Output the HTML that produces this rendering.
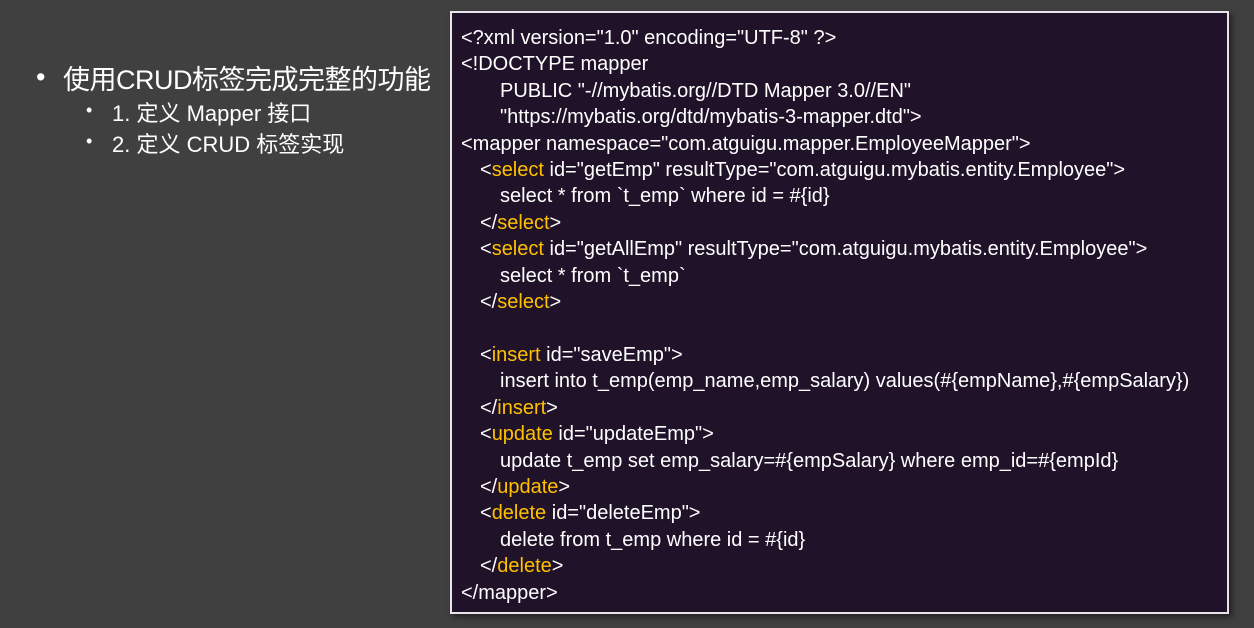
<!DOCTYPE html>
<html><head><meta charset="utf-8"><style>
html,body{margin:0;padding:0}
body{width:1254px;height:628px;background:#404040;position:relative;overflow:hidden;font-family:"Liberation Sans","Noto Sans CJK SC",sans-serif;color:#fff}
.l{position:absolute;white-space:nowrap}
.box{position:absolute;left:450px;top:11px;width:775px;height:599px;background:#201228;border:2px solid #e8e4ea;box-shadow:3px 3px 6px rgba(0,0,0,.5)}
.code{position:absolute;left:9px;top:12px;font-size:20px;line-height:26.4px;white-space:pre;color:#fff}
.o{color:#ffc000}
i{display:inline-block;width:19px}
b{display:inline-block;width:39px;font-weight:normal}
</style></head><body>
<div class="l" style="left:36px;top:62px;font-size:27px">•</div>
<div class="l" style="left:63px;top:58px;font-size:27px;letter-spacing:-0.5px">使用CRUD标签完成完整的功能</div>
<div class="l" style="left:86px;top:100px;font-size:18px">•</div>
<div class="l" style="left:112px;top:96px;font-size:22px">1. 定义 Mapper 接口</div>
<div class="l" style="left:86px;top:131px;font-size:18px">•</div>
<div class="l" style="left:112px;top:127px;font-size:22px">2. 定义 CRUD 标签实现</div>
<div class="box"><div class="code">&lt;?xml version="1.0" encoding="UTF-8" ?&gt;
&lt;!DOCTYPE mapper
<b></b>PUBLIC "-//mybatis.org//DTD Mapper 3.0//EN"
<b></b>"https://mybatis.org/dtd/mybatis-3-mapper.dtd"&gt;
&lt;mapper namespace="com.atguigu.mapper.EmployeeMapper"&gt;
<i></i>&lt;<span class="o">select</span> id="getEmp" resultType="com.atguigu.mybatis.entity.Employee"&gt;
<b></b>select * from `t_emp` where id = #{id}
<i></i>&lt;/<span class="o">select</span>&gt;
<i></i>&lt;<span class="o">select</span> id="getAllEmp" resultType="com.atguigu.mybatis.entity.Employee"&gt;
<b></b>select * from `t_emp`
<i></i>&lt;/<span class="o">select</span>&gt;

<i></i>&lt;<span class="o">insert</span> id="saveEmp"&gt;
<b></b>insert into t_emp(emp_name,emp_salary) values(#{empName},#{empSalary})
<i></i>&lt;/<span class="o">insert</span>&gt;
<i></i>&lt;<span class="o">update</span> id="updateEmp"&gt;
<b></b>update t_emp set emp_salary=#{empSalary} where emp_id=#{empId}
<i></i>&lt;/<span class="o">update</span>&gt;
<i></i>&lt;<span class="o">delete</span> id="deleteEmp"&gt;
<b></b>delete from t_emp where id = #{id}
<i></i>&lt;/<span class="o">delete</span>&gt;
&lt;/mapper&gt;</div></div>
</body></html>
